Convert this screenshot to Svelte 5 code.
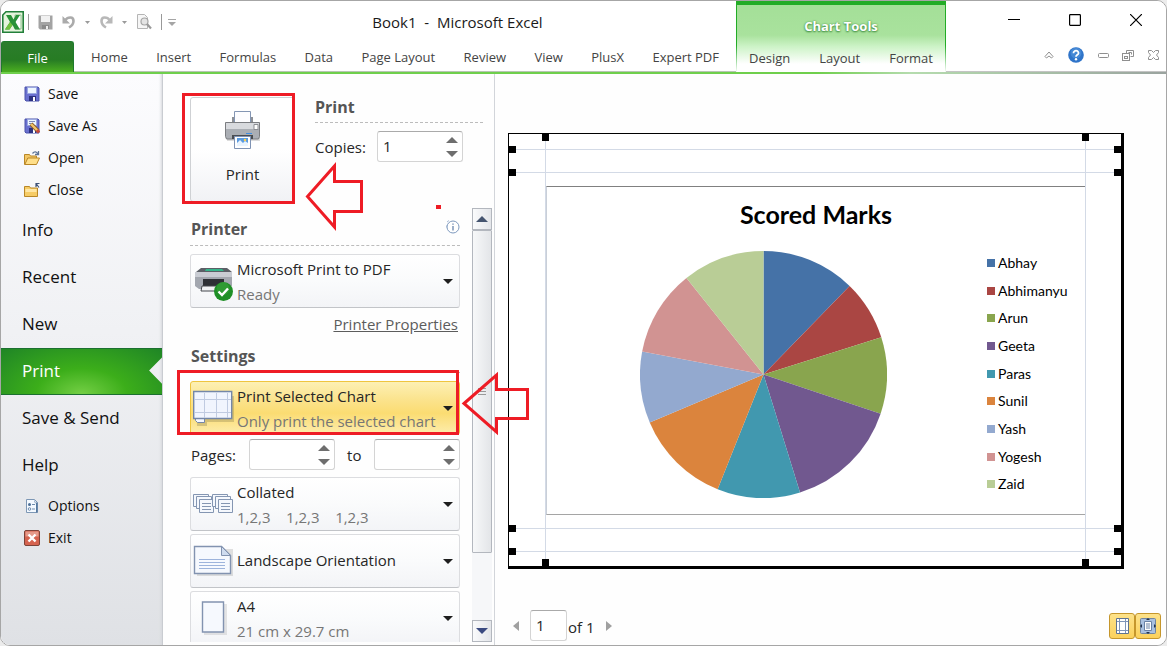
<script>
  const tabs = ['Home', 'Insert', 'Formulas', 'Data', 'Page Layout', 'Review', 'View', 'PlusX', 'Expert PDF'];
  const chartTabs = ['Design', 'Layout', 'Format'];
  const fileActions = ['Save', 'Save As', 'Open', 'Close'];
  const places = ['Info', 'Recent', 'New', 'Print', 'Save & Send', 'Help'];
  const appActions = ['Options', 'Exit'];

  const series = [
    { name: 'Abhay', color: '#4572a7', to: 44.2 },
    { name: 'Abhimanyu', color: '#aa4643', to: 72.5 },
    { name: 'Arun', color: '#89a54e', to: 108.5 },
    { name: 'Geeta', color: '#71588f', to: 162.8 },
    { name: 'Paras', color: '#4198af', to: 201.8 },
    { name: 'Sunil', color: '#db843d', to: 247.1 },
    { name: 'Yash', color: '#93a9cf', to: 280.7 },
    { name: 'Yogesh', color: '#d19392', to: 321.4 },
    { name: 'Zaid', color: '#b9cd96', to: 360 }
  ];

  const R = 124;
  const point = (deg) => {
    const a = (deg * Math.PI) / 180;
    return `${(R + R * Math.sin(a)).toFixed(2)} ${(R - R * Math.cos(a)).toFixed(2)}`;
  };
  const slices = series.map((s, i) => {
    const from = i ? series[i - 1].to : 0;
    return { ...s, d: `M${R} ${R}L${point(from)}A${R} ${R} 0 0 1 ${point(s.to)}Z` };
  });

  let copies = $state('1');
  let page = $state('1');
  let fromPage = $state('');
  let toPage = $state('');
</script>

{#snippet icon(name)}
  <svg class="mi" viewBox="0 0 16 16" aria-hidden="true">
    {#if name === 'Save' || name === 'Save As'}
      <path d="M1 1h13l1 1v13H2l-1-1z" fill="#6a70cf" stroke="#4b52ab" />
      <path d="M3.500 1.500h9v6h-9z" fill="#eef6ff" stroke="#9aa8e0" />
      <path d="M5 10h7v5H5z" fill="#2c3180" />
      <path d="M9 11h2v4H9z" fill="#fff" />
      {#if name === 'Save As'}
        <path d="M5 3.500h6M5 5.500h4" stroke="#7c88b8" />
        <path d="M7 6l7 7" stroke="#8a5a20" stroke-width="4" />
        <path d="M7 6l7 7" stroke="#f2c46a" stroke-width="2.400" />
        <path d="M13 12l2 2.500" stroke="#c5483c" stroke-width="3" />
      {/if}
    {:else if name === 'Open'}
      <path d="M.5 14.500v-10h5l1 1.500h6v3" fill="#f3c766" stroke="#b98727" />
      <path d="M.8 14.500l3-6.500h11.700l-3 6.500z" fill="#ffdf8a" stroke="#b98727" />
      <path d="M8.500 3.500c2-2.500 4-2 5.500.5M14.500 1v3.500H11" fill="none" stroke="#5f7699" stroke-width="1.300" />
    {:else if name === 'Close'}
      <path d="M.5 14.500v-10h5l1 1.500h7v8.500z" fill="#f6cc66" stroke="#b98727" />
      <path d="M1.500 7h11v3h-11z" fill="#ffe7a5" />
      <path d="M15 5.500L12.500 2M12 5V1.500h3.500" fill="none" stroke="#3f5378" stroke-width="1.200" />
    {:else if name === 'Options'}
      <path d="M2.500 1.500h8l3 3v10h-11z" fill="#f4f9ff" stroke="#7d97b5" />
      <path d="M10.500 1.500v3h3v10h-1.500V6z" fill="#56799f" />
      <circle cx="5.500" cy="6.500" r="1.500" fill="#4c6e96" /><circle cx="5.500" cy="11" r="1.300" fill="none" stroke="#6d8bad" />
      <path d="M8 6.500h3M8 11h3" stroke="#6d8bad" />
    {:else}
      <rect x=".5" y=".5" width="15" height="15" rx="1.500" fill="#d5634f" stroke="#7c4238" />
      <path d="M1.500 1.500h13v5h-13z" fill="#e59a8a" />
      <path d="M4.500 4.500l7 7M11.500 4.500l-7 7" stroke="#fff" stroke-width="2.400" />
    {/if}
  </svg>
{/snippet}

{#snippet spins(label)}
  <span class="spins">
    <button aria-label="Increase {label}"><svg viewBox="0 0 12 6"><path d="M6 0l6 6H0z" fill="#6e6e6e" /></svg></button>
    <button aria-label="Decrease {label}"><svg viewBox="0 0 12 6"><path d="M0 0h12L6 6z" fill="#6e6e6e" /></svg></button>
  </span>
{/snippet}

{#snippet card(label, value, sub, kind)}
  <div class="card" class:hot={kind === 'chart'} class:single={!sub}>
    <select aria-label={label}><option>{value}</option></select>
    <svg class="ci" viewBox="0 0 42 44" aria-hidden="true">
      {#if kind === 'printer'}
        <path d="M8 9h26l5 4H3z" fill="#5b5f66" /><path d="M13 10h16l2 2H12z" fill="#35b58a" />
        <path d="M2 13h37v14l-4 3H6l-4-3z" fill="#a3a7af" /><path d="M2 13h37v5H2z" fill="#c9ccd3" />
        <path d="M10 20h21v7H10z" fill="#2e3035" /><path d="M9 27h24v5H8z" fill="#f2f3f5" stroke="#44474c" />
        <circle cx="30.500" cy="32.500" r="9.500" fill="#1f8f26" /><circle cx="30" cy="29.500" r="6.500" fill="#3fa83f" opacity=".5" />
        <path d="M25.500 32.500l3.500 3.500 6-6.500" fill="none" stroke="#fff" stroke-width="2.400" />
      {:else if kind === 'chart'}
        <path d="M3 10h38v26H14v4H4z" fill="#8d8150" opacity=".35" />
        <path d="M2.500 31.500h9v5h-7l-2-2z" fill="#f6f9ff" stroke="#7487a8" />
        <path d="M.7 5.500h38v27H.7z" fill="#f1f5fe" stroke="#7487a8" stroke-width="1.400" />
        <path d="M2 13.500h36M2 26.500h36M11.500 7v25M23.500 7v25M34.500 7v25" stroke="#c0cbe1" />
      {:else if kind === 'collate'}
        {#each [0, 19] as x}
          <g transform="translate({x} 0)" fill="#f5f8fd" stroke="#8496b2">
            <path d="M.5 12.500h15v12h-15z" /><path d="M3.500 14.500h15v12h-15z" /><path d="M6.500 17.500h14v13h-14z" />
            <path d="M9 21.500h9M9 24.500h9M9 27.500h9" />
          </g>
        {/each}
      {:else if kind === 'landscape'}
        <path d="M4 10h36v27H4z" fill="#888" opacity=".25" />
        <path d="M1.500 7.500h27l9 9v18h-36z" fill="#f6f9fe" stroke="#8293b0" stroke-width="1.400" />
        <path d="M28.500 7.500v9h9z" fill="#cfdcef" stroke="#8293b0" />
        <path d="M6 20.500h26M6 23.500h26M6 26.500h26M6 29.500h26" stroke="#9db4dc" />
      {:else}
        <path d="M11 8h23v31H11z" fill="#888" opacity=".2" />
        <path d="M9.500 6h21v30h-21z" fill="#f6f9fe" stroke="#8293b0" stroke-width="1.400" />
      {/if}
    </svg>
    {#if sub}<span class="sub">{sub}</span>{/if}
    <svg class="caret" viewBox="0 0 10 5" aria-hidden="true"><path d="M0 0h10L5 5z" fill="#1e1e1e" /></svg>
  </div>
{/snippet}

<div class="window">
  <header>
    <div class="main-head">
      <div class="title-row">
        <div class="qat">
          <svg width="22" height="22" viewBox="0 0 22 22" aria-hidden="true">
            <path d="M4 .8h17.200v20.400H.8V4z" fill="#e5f4dc" stroke="#23803a" stroke-width="1.600" />
            <path d="M13 4h6v14h-6z" fill="#fff" stroke="#8cc08a" />
            <path d="M4 4h5l2.500 4.500L14 4h4l-4.500 7 4.500 7.500h-5l-2.500-4.500L7.500 18.500H3l5-7.500z" fill="#299238" />
            <path d="M3 18.500l5-7.500 2.500 3-3 4.500z" fill="#73c13f" />
          </svg>
          <i class="sep first"></i>
          <button aria-label="Save"><svg width="15" height="15" viewBox="0 0 15 15"><path d="M.5.500h14v14H2l-1.500-1.500z" fill="#a3a3a3" /><path d="M3 1h9v6H3z" fill="#f1f1f1" /><path d="M4 10h7v4H4z" fill="#8a8a8a" /><path d="M8 11h2v3H8z" fill="#eee" /></svg></button>
          <button aria-label="Undo"><svg width="14" height="14" viewBox="0 0 14 14"><path d="M3 5.500C6 1.500 11.500 1.500 11.500 6c0 3-2 5-4.500 6.500" fill="none" stroke="#ababab" stroke-width="2.600" /><path d="M.5 1v7.500H8z" fill="#ababab" /></svg></button>
          <svg width="5" height="3" viewBox="0 0 5 3" aria-hidden="true"><path d="M0 0h5L2.500 3z" fill="#9a9a9a" /></svg>
          <button aria-label="Redo"><svg width="14" height="14" viewBox="0 0 14 14"><path d="M11 5.500C8 1.500 2.500 1.500 2.500 6c0 3 2 5 4.500 6.500" fill="none" stroke="#b8b8b8" stroke-width="2.600" /><path d="M13.500 1v7.500H6z" fill="#b8b8b8" /></svg></button>
          <svg width="5" height="3" viewBox="0 0 5 3" aria-hidden="true"><path d="M0 0h5L2.500 3z" fill="#9a9a9a" /></svg>
          <button aria-label="Print Preview"><svg width="16" height="16" viewBox="0 0 16 16"><path d="M1.500.500h7l3 3v11h-10z" fill="#f6f6f6" stroke="#b5b5b5" /><circle cx="8.500" cy="7.500" r="3.500" fill="#e4e4e4" stroke="#a5a5a5" stroke-width="1.200" /><path d="M11 10l4 4.500" stroke="#9a9a9a" stroke-width="2.200" /></svg></button>
          <i class="sep"></i>
          <svg class="more" width="8" height="8" viewBox="0 0 8 8" aria-hidden="true"><path d="M0 1.500h8" stroke="#a5a5a5" /><path d="M0 4h8L4 8z" fill="#a5a5a5" /></svg>
        </div>
        <div class="title">Book1&nbsp; - &nbsp;Microsoft Excel</div>
      </div>
      <nav class="tabs" aria-label="Ribbon">
        <button class="file">File</button>
        <div class="tablist">
          {#each tabs as t}<button>{t}</button>{/each}
        </div>
      </nav>
    </div>
    <div class="chart-tools">
      <div class="ct-title">Chart Tools</div>
      <div class="ct-tabs">
        {#each chartTabs as t}<button>{t}</button>{/each}
      </div>
    </div>
    <div class="controls">
      <div class="win-btns">
        <button aria-label="Minimize"><svg width="12" height="12" viewBox="0 0 12 12"><path d="M0 5.500h12" stroke="#000" /></svg></button>
        <button aria-label="Maximize"><svg width="12" height="12" viewBox="0 0 12 12"><rect x=".6" y=".6" width="10.800" height="10.800" rx=".8" fill="none" stroke="#000" stroke-width="1.200" /></svg></button>
        <button aria-label="Close"><svg width="12" height="12" viewBox="0 0 12 12"><path d="M0 0l12 12M12 0L0 12" stroke="#000" stroke-width="1.200" /></svg></button>
      </div>
      <div class="doc-btns">
        <button aria-label="Collapse ribbon"><svg width="10" height="9" viewBox="0 0 10 9"><path d="M5 1l4 4.500-1.500 1.500L5 5 2.500 7 1 5.500z" fill="#fff" stroke="#8f8f8f" /></svg></button>
        <button aria-label="Help"><svg width="16" height="16" viewBox="0 0 16 16"><circle cx="8" cy="8" r="7.800" fill="#2f74c9" /><circle cx="8" cy="6" r="5.500" fill="#5c9be2" opacity=".5" /><path d="M5.500 6.200c0-3.400 5.200-3.200 5 0C10.400 7.800 8 7.900 8 9.800" fill="none" stroke="#fff" stroke-width="1.800" /><circle cx="8" cy="12.200" r="1.200" fill="#fff" /></svg></button>
        <button aria-label="Minimize workbook"><svg width="11" height="5" viewBox="0 0 11 5"><rect x=".5" y=".5" width="10" height="4" rx="1" fill="#fff" stroke="#8f8f8f" /></svg></button>
        <button aria-label="Restore workbook"><svg width="12" height="11" viewBox="0 0 12 11"><path d="M4.500 3.500v-3h7v6h-3M6.500 2.500h3v2" fill="none" stroke="#8f8f8f" /><rect x=".5" y="3.500" width="7" height="7" fill="#fff" stroke="#8f8f8f" /><rect x="2.500" y="6.500" width="3" height="2" fill="none" stroke="#8f8f8f" /></svg></button>
        <button aria-label="Close workbook"><svg width="11" height="10" viewBox="0 0 11 10"><path d="M.5.500h3l2 2 2-2h3v2L8.500 5l2 2.500v2h-3l-2-2-2 2h-3v-2L2.500 5l-2-2.500z" fill="#fff" stroke="#8f8f8f" /></svg></button>
      </div>
    </div>
  </header>

  <main>
    <aside>
      <div class="group">{#each fileActions as a}<button class="act">{@render icon(a)}{a}</button>{/each}</div>
      <div class="group">{#each places as p}<button class="place" class:on={p === 'Print'}>{p}</button>{/each}</div>
      <div class="group">{#each appActions as a}<button class="act">{@render icon(a)}{a}</button>{/each}</div>
    </aside>

    <section class="settings">
      <div class="top">
        <button class="print">
          <svg width="36" height="40" viewBox="0 0 36 40" aria-hidden="true">
            <path d="M2 14h33v16H2z" fill="#777" opacity=".25" />
            <path d="M9.500.500h16v13h-16z" fill="#fdfdff" stroke="#8496b4" />
            <path d="M7 6h2v6H7zM26 6h2v6h-2z" fill="#8d9096" />
            <path d="M.5 11.500h34v14l-1 2.500H1.500l-1-2.500z" fill="#aaaeb4" stroke="#7b7d81" />
            <path d="M1 12h33v6H1z" fill="#d8dade" /><path d="M29 13.500h4v5h-4z" fill="#fff" stroke="#8b8d92" />
            <path d="M7 24h21v4H7z" fill="#4a4d52" /><path d="M21 22.500h6" stroke="#3e8de0" />
            <path d="M9.500 25.500h16v12h-16z" fill="#fff" stroke="#7f93b4" /><path d="M12 27h11v8H12z" fill="#5b9be0" />
            <path d="M12 35v-3l3-3 3 3 2-2 3 2v3z" fill="#e9f4ff" /><circle cx="20" cy="29" r="1.200" fill="#ffd04a" />
          </svg>
          <span>Print</span>
        </button>
        <div class="copies">
          <h2>Print</h2>
          <div class="row">
            <label for="copies">Copies:</label>
            <div class="num"><input id="copies" type="text" bind:value={copies} />{@render spins('copies')}</div>
          </div>
        </div>
      </div>

      <div class="scroller">
        <div class="content">
          <div class="head">
            <h2>Printer</h2>
            <svg width="15" height="15" viewBox="0 0 15 15" aria-hidden="true"><circle cx="8" cy="8" r="6" fill="#fff" stroke="#7d98bd" /><path d="M8 7v4.500M8 4.500v1.300" stroke="#5b7aa6" stroke-width="1.200" /><path d="M2 3l2-1.500M1.500 6.500v2" stroke="#a9bcd6" /></svg>
          </div>
          {@render card('Printer', 'Microsoft Print to PDF', 'Ready', 'printer')}
          <div class="link"><a href="#properties">Printer Properties</a></div>
          <div class="head"><h2>Settings</h2></div>
          {@render card('What to print', 'Print Selected Chart', 'Only print the selected chart', 'chart')}
          <div class="pages">
            <label for="from">Pages:</label>
            <div class="num"><input id="from" type="text" bind:value={fromPage} />{@render spins('first page')}</div>
            <label for="to">to</label>
            <div class="num"><input id="to" type="text" bind:value={toPage} />{@render spins('last page')}</div>
          </div>
          <div class="cards">
            {@render card('Collation', 'Collated', '1,2,3    1,2,3    1,2,3', 'collate')}
            {@render card('Orientation', 'Landscape Orientation', '', 'landscape')}
            {@render card('Paper size', 'A4', '21 cm x 29.7 cm', 'paper')}
          </div>
        </div>
        <div class="bar">
          <button aria-label="Scroll up"><svg width="12" height="6" viewBox="0 0 12 6"><path d="M6 0l6 6H0z" fill="#44546f" /></svg></button>
          <div class="thumb"><i></i></div>
          <button aria-label="Scroll down"><svg width="12" height="6" viewBox="0 0 12 6"><path d="M0 0h12L6 6z" fill="#3a4a80" /></svg></button>
        </div>
      </div>
    </section>

    <section class="preview">
      <div class="sheet">
        <div class="frame">
          <h1>Scored Marks</h1>
          <svg class="pie" viewBox="0 0 248 248" role="img" aria-label="Pie chart">
            {#each slices as s}<path d={s.d} fill={s.color} />{/each}
          </svg>
          <ul>
            {#each series as s}<li><i style="background:{s.color}"></i>{s.name}</li>{/each}
          </ul>
        </div>
        {#each ['t1', 't2', 'b2', 'b1'] as g}<div class="guide h {g}"></div>{/each}
        {#each ['l', 'r'] as g}<div class="guide v {g}"></div>{/each}
      </div>
      <footer>
        <div class="pager">
          <button aria-label="Previous page"><svg width="6" height="10" viewBox="0 0 6 10"><path d="M6 0v10L0 5z" fill="#a0a0a0" /></svg></button>
          <input aria-label="Page" type="text" bind:value={page} />
          <span>of 1</span>
          <button aria-label="Next page"><svg width="6" height="10" viewBox="0 0 6 10"><path d="M0 0v10l6-5z" fill="#a0a0a0" /></svg></button>
        </div>
        <div class="views">
          <button aria-label="Show margins"><svg width="15" height="16" viewBox="0 0 15 16"><path d="M1.500.500h12v15h-12z" fill="#fff" stroke="#5f7390" /><path d="M4.500 1v14M10.500 1v14M2 3.500h11M2 12.500h11" stroke="#7f95b8" /></svg></button>
          <button aria-label="Zoom to page"><svg width="16" height="16" viewBox="0 0 16 16"><rect x=".5" y=".5" width="15" height="15" rx="1" fill="#a9c0df" stroke="#71859f" /><path d="M4.500 3.500h7v9h-7z" fill="#fff" stroke="#6a82a6" /><path d="M6 6h4M6 8h4M6 10h4" stroke="#6a82a6" /><path d="M8 0l2 2H6zM8 16l2-2H6zM0 8l2-2v4zM16 8l-2-2v4z" fill="#24344f" /></svg></button>
        </div>
      </footer>
    </section>

    <svg class="marks" width="380" height="380" viewBox="163 74 380 380" fill="none" stroke="#ee1c25" stroke-width="3" aria-hidden="true">
      <path d="M183.500 94.500h110v108h-110z" />
      <path d="M178.500 371.500h279v62h-279z" />
      <path d="M307.500 196.500L334.500 166v15.500h27v30h-27V227z" />
      <path d="M464 403.500L496.500 375v14.500h31v29h-31V432z" />
      <path d="M436 205h5v4h-5z" fill="#ee1c25" stroke="none" />
    </svg>
  </main>
</div>

<style>
  :global(body) { margin: 0; background: #ececec; }
  * { box-sizing: border-box; }
  button, input, select { font: inherit; color: inherit; margin: 0; }
  button { border: 0; padding: 0; background: none; display: flex; align-items: center; justify-content: center; white-space: nowrap; }
  svg { display: block; flex: none; }
  h1, h2, ul { margin: 0; padding: 0; }

  .window {
    height: 100vh; display: flex; flex-direction: column; overflow: hidden;
    border: 1px solid #a6a6a6; border-radius: 10px; background: #fff;
    font: 15px/20px "Open Sans", "Noto Sans", sans-serif; color: #262626;
  }

  header { display: grid; grid-template-columns: 735fr 210fr 220fr; height: 73px; flex: none; background: #fff; border-bottom: 2px solid; border-image: linear-gradient(90deg, #6fcf4c 70%, #b5dcae 78%, #9aa39f) 1; font-size: 13px; color: #444; }
  .main-head { display: flex; flex-direction: column; }
  .title-row { display: flex; height: 40px; align-items: center; padding-top: 2px; }
  .qat { display: flex; align-items: center; gap: 9px; width: 178px; padding-left: 1px; }
  .sep { width: 1px; height: 16px; background: #999; }
  .first { margin-left: -5px; }
  .more { margin-left: -3px; }
  .title { flex: 1; text-align: center; font-size: 15px; color: #1a1a1a; white-space: nowrap; }
  .tabs { display: flex; flex: 1; }
  .tabs button, .ct-tabs button { padding-top: 2px; }
  .file { width: 73px; color: #fff; border: 1px solid #1f7a2c; border-bottom: 0; border-radius: 3px 3px 0 0; background: linear-gradient(#2c7d2d, #277c24 60%, #4bae20); }
  .tablist { flex: 1; display: flex; justify-content: space-between; padding: 0 17px; border-bottom: 1px solid #b9c4b5; }
  .chart-tools { display: flex; flex-direction: column; border: solid; border-width: 4px 1px 0; border-image: linear-gradient(#22ac26 60%, #fff) 1; background: linear-gradient(#a4df98, #a9e29d 45%, #cdf3c7 62%, #fff 88%); }
  .ct-title { height: 36px; padding-top: 6px; display: flex; align-items: center; justify-content: center; color: #fff; font-weight: 700; text-shadow: 0 1px 2px #3c8a3c, 0 0 2px #4d9c4d; }
  .ct-tabs { flex: 1; display: flex; justify-content: space-between; padding: 0 12px; }
  .controls { display: flex; flex-direction: column; border-bottom: 1px solid #c4c4c4; }
  .win-btns { display: flex; height: 38px; padding-left: 37px; }
  .win-btns button { width: 61px; }
  .doc-btns { display: flex; flex: 1; align-items: center; justify-content: space-between; padding: 0 7px 0 98px; }

  main { flex: 1; min-height: 0; display: grid; grid-template-columns: 162px 332px 1fr; position: relative; background: #fefefe; }
  .marks { position: absolute; left: 162px; top: 0; pointer-events: none; }

  aside { display: flex; flex-direction: column; gap: 1px; padding-top: 4px; background: linear-gradient(#fcfcfe, #f0f1f4 45%, #dfe1e5); border-right: 1px solid #c9ccd1; color: #111; box-shadow: inset -3px 0 3px -2px #d5d7db; }
  .group { display: flex; flex-direction: column; }
  aside button { justify-content: flex-start; }
  .act { height: 32px; padding-left: 23px; gap: 8px; font-size: 14px; }
  .mi { width: 16px; height: 16px; }
  .place { height: 47px; padding: 0 0 2px 21px; font-size: 17px; }
  .place.on { color: #fff; background: radial-gradient(ellipse at 50% 100%, #74cf45, #3cae1a 40%, #1f8526 100%); border: solid #1b7030; border-width: 1px 0; clip-path: polygon(0 0, 100% 0, 100% 20%, 92% 48%, 100% 76%, 100% 100%, 0 100%); }

  .settings { display: flex; flex-direction: column; min-height: 0; padding: 23px 2px 3px 27px; border-right: 1px solid #d2d5da; }
  .top { display: flex; gap: 20px; height: 111px; flex: none; padding-right: 9px; }
  .print { width: 105px; height: 105px; flex-direction: column; gap: 13px; padding-bottom: 4px; border: 1px solid #cfd1d4; border-radius: 3px; background: linear-gradient(#fff 50%, #f1f2f5); }
  h2 { font-size: 16px; line-height: 20px; color: #555; }
  .copies { flex: 1; }
  .copies h2 { height: 26px; border-bottom: 1px dashed #bcbcbc; }
  .row { display: flex; align-items: center; justify-content: space-between; margin-top: 8px; padding-right: 20px; }
  .num { display: flex; width: 86px; height: 31px; border: 1px solid #d4d4d4; border-top-color: #aaa; border-radius: 3px; background: #fff; }
  .num input { flex: 1; min-width: 0; border: 0; padding: 0 5px 2px; background: none; outline: 0; }
  .spins { display: flex; flex-direction: column; justify-content: center; gap: 8px; padding-right: 4px; }
  .spins svg { width: 12px; height: 6px; }

  .scroller { flex: 1; min-height: 0; display: flex; justify-content: space-between; }
  .content { width: 270px; overflow: hidden; }
  .head { display: flex; justify-content: space-between; align-items: flex-start; height: 38px; padding: 11px 0 0 1px; border-bottom: 1px dashed #bcbcbc; margin-bottom: 8px; }
  .card { display: grid; grid-template: 28px 24px / 46px 1fr 18px; height: 54px; border: 1px solid #dcdde0; border-bottom-color: #c2c4c8; border-radius: 3px; background: linear-gradient(#fff, #fafbfc 50%, #f3f4f7); }
  .card > * { pointer-events: none; }
  .card select { grid-area: 1 / 1 / 3 / 4; appearance: none; pointer-events: auto; border: 0; background: none; padding: 0 20px 24px 46px; outline: 0; }
  .card.single select { padding-bottom: 2px; }
  .ci { grid-area: 1 / 1 / 3 / 2; width: 42px; height: 44px; align-self: center; margin-left: 2px; }
  .sub { grid-area: 2 / 2 / 3 / 4; padding-top: 1px; color: #767676; white-space: pre; }
  .caret { grid-area: 1 / 3 / 3 / 4; width: 10px; height: 5px; align-self: center; margin-left: 2px; }
  .card.hot { border-color: #efc53f; background: linear-gradient(#fdf0b4, #fbe38c 35%, #fbdc72 60%, #fdedad); }
  .link { display: flex; justify-content: flex-end; height: 27px; padding-top: 6px; }
  .link a { color: #5c5c5c; padding-right: 2px; }
  .pages { display: flex; justify-content: space-between; align-items: center; margin: 4px 0 7px; padding-left: 1px; }
  .cards { display: grid; gap: 3px; }

  .bar { width: 20px; display: flex; flex-direction: column; background: #f6f7f9; }
  .bar button { height: 22px; flex: none; border: 1px solid #b3b7be; background: linear-gradient(90deg, #fafbfc, #e3e5e9); }
  .thumb { flex: 0 1 323px; margin-bottom: auto; display: flex; align-items: center; justify-content: center; border: 1px solid #b3b7be; border-radius: 1px; background: linear-gradient(90deg, #f7f8f9, #e3e5e8); }
  .thumb i { width: 8px; height: 8px; background: repeating-linear-gradient(#999 0 1px, transparent 1px 3px); }

  .preview { display: flex; flex-direction: column; padding: 59px 5px 4px 13px; min-width: 0; }
  .sheet { position: relative; margin-right: 37px; padding: 52px 35px 51px 37px; border: 1px solid #000; border-right-width: 3px; border-bottom-width: 3px; background: #fff; }
  .frame { display: grid; grid-template: 64px 247px / 1fr 98px; border: 1px solid #a5a5a5; border-top-color: #808080; border-right-color: #c9cfd8; border-left-color: #c9cfd8; height: 329px; color: #000; font-family: Lato, sans-serif; }
  h1 { grid-area: 1 / 1 / 2 / 3; font-size: 25px; line-height: 54px; text-align: center; }
  .pie { width: 247px; height: 247px; justify-self: center; margin-right: 8px; }
  ul { list-style: none; display: flex; flex-direction: column; margin-top: -2px; font-size: 14px; }
  li { flex: 1; display: flex; align-items: center; gap: 3px; }
  li i { width: 8px; height: 8px; }

  .guide { position: absolute; background: #d3dae6; }
  .guide::before, .guide::after { content: ""; position: absolute; width: 7px; height: 7px; background: #000; }
  .h { left: 0; right: 0; height: 1px; }
  .h::before { left: 0; top: -3px; }
  .h::after { right: 0; top: -3px; }
  .v { top: 0; bottom: 0; width: 1px; }
  .v::before { top: 0; left: -3px; }
  .v::after { bottom: 0; left: -3px; }
  .t1 { top: 15px; } .t2 { top: 38px; } .b2 { bottom: 37px; } .b1 { bottom: 14px; }
  .l { left: 36px; } .r { right: 35px; }

  footer { margin-top: auto; display: flex; justify-content: space-between; align-items: flex-end; }
  .pager { display: flex; align-items: center; padding-left: 5px; }
  .pager input { width: 37px; height: 31px; margin: 0 1px 0 11px; padding: 0 5px 2px; border: 1px solid #d4d4d4; border-top-color: #aaa; border-radius: 3px; }
  .pager span { margin-right: 11px; padding-top: 2px; }
  .views { display: flex; margin-bottom: 2px; }
  .views button { width: 26px; height: 26px; border: 1px solid #c5962c; border-radius: 3px; background: linear-gradient(#fde28a, #fbd15c); }
</style>
